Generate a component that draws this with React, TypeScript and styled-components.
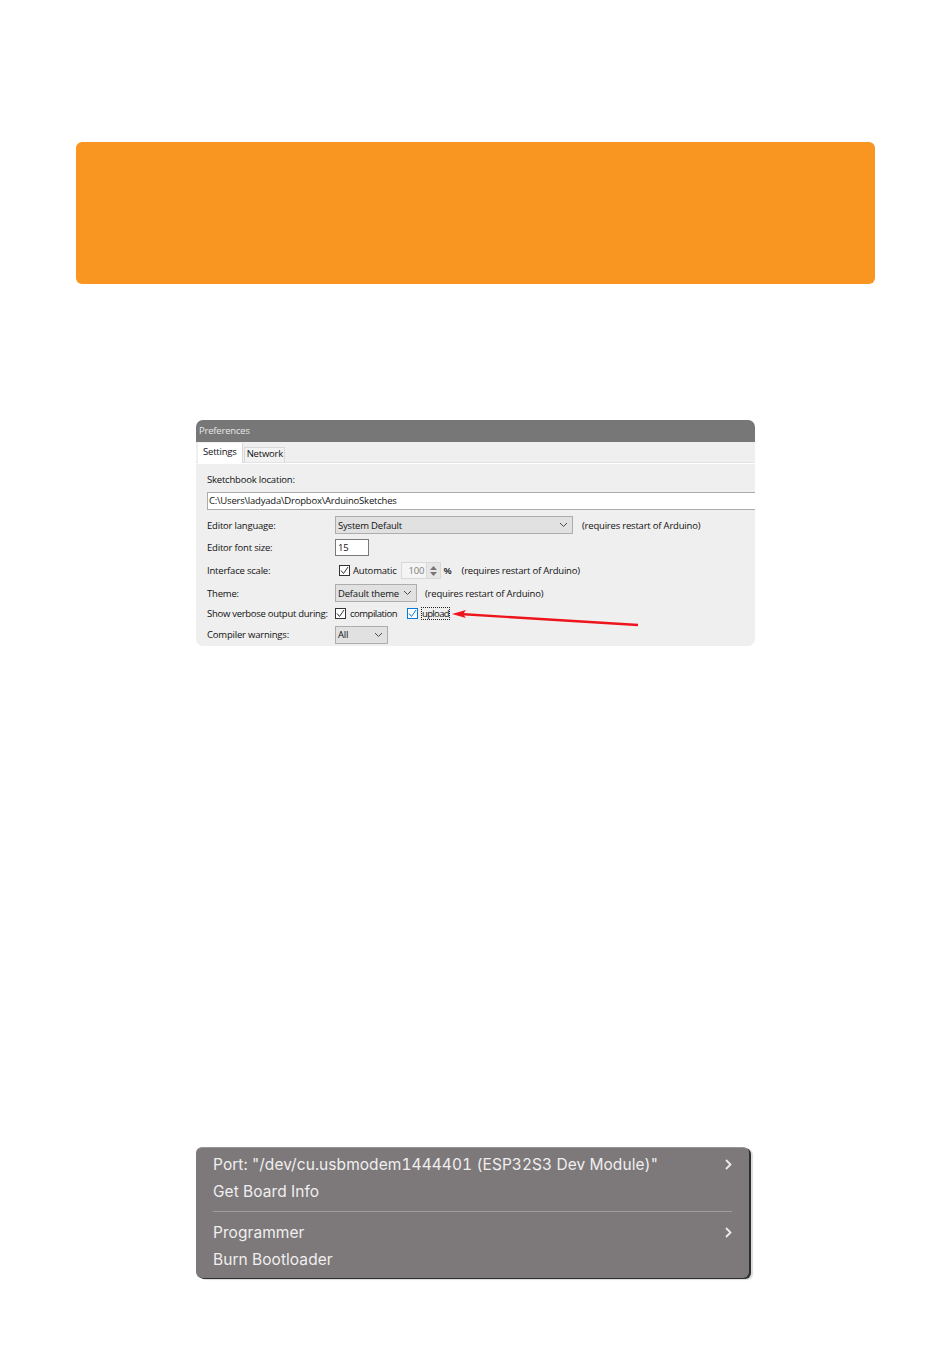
import styled, { createGlobalStyle } from "styled-components";

const GlobalStyle = createGlobalStyle`
    html, body {
        margin: 0;
        background: #ffffff;
    }
`;

const Page = styled.div`
    width: 950px;
    height: 1369px;
    box-sizing: border-box;
    padding-top: 142px;
    display: flex;
    flex-direction: column;
    align-items: flex-start;
`;

const Banner = styled.div`
    width: 799px;
    height: 142px;
    margin-left: 76px;
    background: #f99621;
    border-radius: 6px;
`;

const Window = styled.div`
    position: relative;
    width: 559px;
    height: 226px;
    margin: 136px 0 0 196px;
    background: #efefef;
    border-radius: 7px;
    overflow: hidden;
    font-family: "Open Sans", "Noto Sans", sans-serif;
    font-size: 9.5px;
    letter-spacing: -0.2px;
    color: #111111;
`;

const TitleBar = styled.div`
    height: 22px;
    background: #777777;
    color: #e6e6e6;
    line-height: 22px;
    padding-left: 3px;
`;

const TabStrip = styled.div`
    height: 20px;
    display: flex;
    align-items: flex-end;
    padding-left: 2px;
    box-sizing: border-box;
`;

const Tab = styled.div<{ $active?: boolean }>`
    box-sizing: border-box;
    height: ${(p) => (p.$active ? "20px" : "15px")};
    margin-right: 1px;
    padding: ${(p) => (p.$active ? "0 5px" : "0 1px 0 2px")};
    line-height: ${(p) => (p.$active ? "18px" : "12px")};
    background: ${(p) => (p.$active ? "#ffffff" : "#f2f2f2")};
    border: 1px solid #d9d9d9;
    border-bottom: none;
    ${(p) => p.$active && "border-top: none; border-left: none; margin-bottom: -1px; position: relative;"}
`;

const TabRule = styled.div`
    height: 2px;
    background: #ffffff;
    border-top: 1px solid #e3e3e3;
    box-sizing: border-box;
`;

const Settings = styled.div`
    padding: 10px 0 0 11px;
`;

const Caption = styled.div`
    height: 18px;
    line-height: 12px;
`;

const PathField = styled.div`
    box-sizing: border-box;
    height: 18px;
    margin-bottom: 6px;
    padding-left: 1px;
    background: #ffffff;
    border: 1px solid #ababab;
    border-right: none;
    line-height: 15px;
`;

const Row = styled.div<{ $h: number }>`
    display: flex;
    align-items: center;
    height: ${(p) => p.$h}px;
    white-space: nowrap;
`;

const Label = styled.div<{ $tight?: boolean }>`
    width: 128px;
    flex: none;
    ${(p) => p.$tight && "letter-spacing: -0.28px;"}
`;

const Select = styled.div<{ $w: number }>`
    box-sizing: border-box;
    width: ${(p) => p.$w}px;
    height: 18px;
    display: flex;
    align-items: center;
    justify-content: space-between;
    padding: 0 4px 0 2px;
    background: #e1e1e1;
    border: 1px solid #adadad;
`;

const NumberBox = styled.div`
    box-sizing: border-box;
    width: 34px;
    height: 17px;
    padding-left: 2px;
    line-height: 15px;
    background: #ffffff;
    border: 1px solid #7a7a7a;
`;

const CheckBox = styled.span<{ $blue?: boolean }>`
    box-sizing: border-box;
    width: 11px;
    height: 11px;
    flex: none;
    display: inline-flex;
    background: #ffffff;
    border: 1px solid ${(p) => (p.$blue ? "#0a78d7" : "#333333")};
    color: ${(p) => (p.$blue ? "#0a78d7" : "#333333")};
`;

const Spin = styled.div`
    box-sizing: border-box;
    width: 40px;
    height: 17px;
    margin: 0 3px 0 4px;
    display: flex;
    align-items: center;
    justify-content: space-between;
    padding-left: 7px;
    border: 1px solid #d9d9d9;
    background: #f4f4f4;
    color: #7d7d7d;
`;

const SpinButtons = styled.div`
    width: 13px;
    height: 15px;
    display: flex;
    flex-direction: column;
    align-items: center;
    justify-content: center;
    gap: 2px;
    background: #e6e6e6;
    border-left: 1px solid #d9d9d9;
`;

const Hint = styled.span<{ $ml: number }>`
    margin-left: ${(p) => p.$ml}px;
`;

const TightHint = styled(Hint)`
    letter-spacing: -0.48px;
`;

const Percent = styled.span`
    font-weight: 600;
`;

const Focused = styled.span`
    outline: 1px dotted #222222;
    line-height: 11px;
    margin-left: 4px;
    letter-spacing: -0.65px;
`;

const Arrow = styled.svg`
    position: absolute;
    left: 250px;
    top: 185px;
`;

const Menu = styled.div`
    box-sizing: border-box;
    width: 553px;
    height: 131px;
    margin: 501px 0 0 196px;
    padding: 3px 17px 0 17px;
    background: #7d7879;
    border-radius: 6px;
    border-top: 1px solid #9a9697;
    box-shadow: 2px 1px 0 #2e2e2e, 4px 2px 1px #dcdcdc;
    font-family: "Inter", "Liberation Sans", sans-serif;
    font-size: 15.5px;
    letter-spacing: 0.06px;
    font-variant-numeric: tabular-nums;
    color: #efefef;
`;

const MenuItem = styled.div`
    height: 27px;
    display: flex;
    align-items: center;
    justify-content: space-between;
`;

const Divider = styled.div`
    height: 1px;
    margin: 6px 0 7px;
    background: #a09c9d;
`;

const Tick = () => (
    <svg width="9" height="9" viewBox="0 0 9 9" fill="none" stroke="currentColor" strokeWidth="1">
        <path d="M1 4.5 L3.5 7.5 L8 1" />
    </svg>
);

const Caret = () => (
    <svg width="9" height="6" viewBox="0 0 9 6" fill="none" stroke="#4a4a4a" strokeWidth="1">
        <path d="M1 1 L4.5 4.5 L8 1" />
    </svg>
);

const SpinTriangle = ({ down }: { down?: boolean }) => (
    <svg width="7" height="4" viewBox="0 0 7 4" fill="#777777">
        <path d={down ? "M0 0 H7 L3.5 4 Z" : "M0 4 H7 L3.5 0 Z"} />
    </svg>
);

const Chevron = () => (
    <svg width="7" height="11" viewBox="0 0 7 11" fill="none" stroke="#ececec" strokeWidth="1.8">
        <path d="M1 1 L5.5 5.5 L1 10" />
    </svg>
);

export default function App() {
    return (
        <Page>
            <GlobalStyle />
            <Banner />

            <Window>
                <TitleBar>Preferences</TitleBar>
                <TabStrip>
                    <Tab $active>Settings</Tab>
                    <Tab>Network</Tab>
                </TabStrip>
                <TabRule />
                <Settings>
                    <Caption>Sketchbook location:</Caption>
                    <PathField>C:\Users\ladyada\Dropbox\ArduinoSketches</PathField>
                    <Row $h={18}>
                        <Label>Editor language:</Label>
                        <Select $w={238}>System Default<Caret /></Select>
                        <Hint $ml={9}>(requires restart of Arduino)</Hint>
                    </Row>
                    <Row $h={27}>
                        <Label>Editor font size:</Label>
                        <NumberBox>15</NumberBox>
                    </Row>
                    <Row $h={19}>
                        <Label>Interface scale:</Label>
                        <Hint $ml={4} />
                        <CheckBox><Tick /></CheckBox>
                        <Hint $ml={3}>Automatic</Hint>
                        <Spin>
                            100
                            <SpinButtons>
                                <SpinTriangle />
                                <SpinTriangle down />
                            </SpinButtons>
                        </Spin>
                        <Percent>%</Percent>
                        <Hint $ml={10}>(requires restart of Arduino)</Hint>
                    </Row>
                    <Row $h={26}>
                        <Label>Theme:</Label>
                        <Select $w={82}>Default theme<Caret /></Select>
                        <Hint $ml={8}>(requires restart of Arduino)</Hint>
                    </Row>
                    <Row $h={15}>
                        <Label $tight>Show verbose output during:</Label>
                        <CheckBox><Tick /></CheckBox>
                        <TightHint $ml={4}>compilation</TightHint>
                        <Hint $ml={10} />
                        <CheckBox $blue><Tick /></CheckBox>
                        <Focused>upload</Focused>
                    </Row>
                    <Row $h={27}>
                        <Label>Compiler warnings:</Label>
                        <Select $w={53}>All<Caret /></Select>
                    </Row>
                </Settings>
                <Arrow width="195" height="22" viewBox="0 0 195 22">
                    <path d="M192 20 L14 9" stroke="#ee141c" strokeWidth="2.4" fill="none" />
                    <path d="M6 9 L20 5 L17 9.2 L20 13 Z" fill="#ee141c" />
                </Arrow>
            </Window>

            <Menu>
                <MenuItem>
                    Port: "/dev/cu.usbmodem1444401 (ESP32S3 Dev Module)"
                    <Chevron />
                </MenuItem>
                <MenuItem>Get Board Info</MenuItem>
                <Divider />
                <MenuItem>
                    Programmer
                    <Chevron />
                </MenuItem>
                <MenuItem>Burn Bootloader</MenuItem>
            </Menu>
        </Page>
    );
}
